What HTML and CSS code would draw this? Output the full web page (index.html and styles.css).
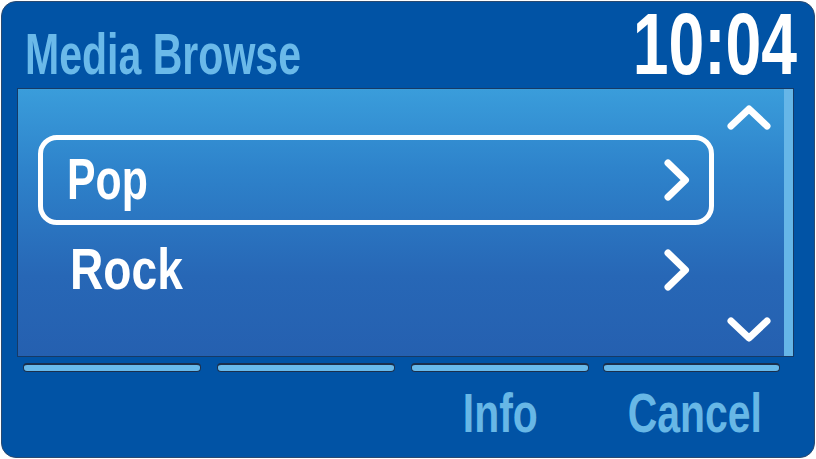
FILE: index.html
```html
<!DOCTYPE html>
<html>
<head>
<meta charset="utf-8">
<link rel="stylesheet" href="styles.css">
</head>
<body>
<div class="frame">
  <div class="header">
    <span class="title"><span class="sx sx-title">Media Browse</span></span>
    <span class="clock"><span class="sx sx-r">10:04</span></span>
  </div>
  <div class="panel">
    <div class="list">
      <div class="item selected">
        <span class="label"><span class="sx sx-pop">Pop</span></span>
        <svg class="chev" width="26" height="42" viewBox="0 0 26 42"><path d="M4 4 L21.5 21 L4 38" fill="none" stroke="#fff" stroke-width="7" stroke-linecap="round" stroke-linejoin="round"/></svg>
      </div>
      <div class="item">
        <span class="label label-rock"><span class="sx sx-rock">Rock</span></span>
        <svg class="chev" width="26" height="42" viewBox="0 0 26 42"><path d="M4 4 L21.5 21 L4 38" fill="none" stroke="#fff" stroke-width="7" stroke-linecap="round" stroke-linejoin="round"/></svg>
      </div>
    </div>
    <div class="arrows">
      <svg width="44" height="26" viewBox="0 0 44 26"><path d="M4 22 L22 5 L40 22" fill="none" stroke="#fff" stroke-width="7" stroke-linecap="round" stroke-linejoin="round"/></svg>
      <svg width="44" height="26" viewBox="0 0 44 26"><path d="M4 4 L22 21 L40 4" fill="none" stroke="#fff" stroke-width="7" stroke-linecap="round" stroke-linejoin="round"/></svg>
    </div>
    <div class="scrollbar"></div>
  </div>
  <div class="keys">
    <div class="bar"></div>
    <div class="bar"></div>
    <div class="bar"></div>
    <div class="bar last"></div>
  </div>
  <div class="keys labels">
    <div class="key"></div>
    <div class="key"></div>
    <div class="key"><span class="sx sx-c">Info</span></div>
    <div class="key last"><span class="sx sx-c">Cancel</span></div>
  </div>
</div>
</body>
</html>
```

FILE: styles.css
```css
html, body {
  margin: 0;
  padding: 0;
  background: #ffffff;
  width: 816px;
  height: 459px;
  overflow: hidden;
}

.frame {
  box-sizing: border-box;
  margin: 1px 0 0 1px;
  width: 814px;
  height: 457px;
  border: 1px solid #2b4a70;
  border-radius: 15px;
  background: #0153a5;
  font-family: "Liberation Sans", Arial, sans-serif;
  font-weight: bold;
  display: flex;
  flex-direction: column;
}

.sx {
  display: inline-block;
  transform: scaleX(0.73);
  transform-origin: left center;
  white-space: nowrap;
}
.sx-r { transform-origin: right center; }
.sx-c { transform-origin: center center; }
.sx-title { transform: scaleX(0.72); }
.sx-pop { transform: scaleX(0.75); }
.sx-rock { transform: scaleX(0.81); }

.header {
  box-sizing: border-box;
  height: 86px;
  display: flex;
  justify-content: space-between;
  align-items: baseline;
  padding: 4px 17px 0 23px;
}

.title {
  font-size: 57px;
  line-height: 57px;
  color: #6ab9e9;
}

.clock {
  font-size: 88px;
  line-height: 76px;
  color: #ffffff;
}

.panel {
  box-sizing: border-box;
  margin-left: 15px;
  width: 777px;
  height: 269px;
  border: 1px solid #163a66;
  background: linear-gradient(to bottom, #3a9ddb 0%, #2e83cb 30%, #2767b6 70%, #2560b0 100%);
  display: flex;
}

.list {
  width: 696px;
  padding: 46px 0 0 20px;
  box-sizing: border-box;
  display: flex;
  flex-direction: column;
}

.item {
  box-sizing: border-box;
  width: 676px;
  height: 90px;
  border: 5px solid transparent;
  border-radius: 19px;
  display: flex;
  align-items: center;
  justify-content: space-between;
  padding: 0 19px 0 24px;
  color: #ffffff;
  font-size: 57px;
}

.item.selected {
  border-color: #ffffff;
}

.item .label {
  line-height: 57px;
  height: 57px;
  margin-top: -2px;
}

.item .label-rock {
  padding-left: 3px;
}

.chev { display: block; }

.arrows {
  width: 69px;
  display: flex;
  flex-direction: column;
  justify-content: space-between;
  align-items: center;
  padding: 15px 0 13px;
  box-sizing: border-box;
}
.arrows svg { display: block; }

.scrollbar {
  width: 9px;
  margin: 0 0 0 auto;
  background: #66b6e8;
}

.keys {
  display: grid;
  grid-template-columns: 178px 178px 178px 177px;
  column-gap: 16px;
  margin: 6px 0 0 21px;
}

.keys .last {
  margin-left: -2px;
  margin-right: 2px;
}

.bar {
  box-sizing: border-box;
  height: 9px;
  border: 1px solid #1b2f4c;
  border-top-width: 2px;
  border-radius: 4px;
  background: #68b9ea;
}

.labels {
  margin-top: 13px;
}

.key {
  text-align: center;
  font-size: 56px;
  line-height: 56px;
  color: #67b7e6;
}
```
